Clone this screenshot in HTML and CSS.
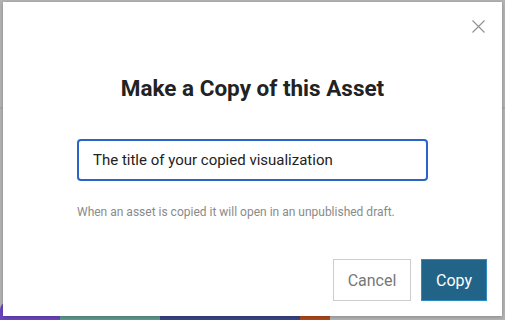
FILE: index.html
```html
<!DOCTYPE html>
<html lang="en">
<head>
    <meta charset="UTF-8">
    <meta name="viewport" content="width=device-width, initial-scale=1.0">
    <title>Make a Copy</title>
    <link rel="stylesheet" href="styles.css">
</head>
<body>
    <!-- page behind the overlay -->
    <div class="backdrop">
        <div class="rule"></div>
        <div class="tiles">
            <span class="tile purple"></span>
            <span class="tile teal"></span>
            <span class="tile navy"></span>
            <span class="tile orange"></span>
        </div>
    </div>

    <div class="dialog">
        <button class="close" aria-label="Close">
            <svg width="13" height="13" viewBox="0 0 13 13">
                <path d="M0.5 0.5 L12.5 12.5 M12.5 0.5 L0.5 12.5" stroke="#8f8f8f" stroke-width="1.1" fill="none"/>
            </svg>
        </button>
        <h1 class="title">Make a Copy of this Asset</h1>
        <div class="field">
            <input type="text" class="name-input" value="The title of your copied visualization">
            <p class="hint">When an asset is copied it will open in an unpublished draft.</p>
        </div>
        <div class="actions">
            <button class="btn btn-cancel">Cancel</button>
            <button class="btn btn-copy">Copy</button>
        </div>
    </div>
</body>
</html>
```

FILE: styles.css
```css
body {
    margin: 0;
    width: 505px;
    height: 320px;
    overflow: hidden;
    background-color: #b4b4b4;
    font-family: Roboto, "Liberation Sans", sans-serif;
    position: relative;
}

.backdrop {
    height: 100%;
    display: flex;
    flex-direction: column;
    justify-content: space-between;
}

.rule {
    margin-top: 107px;
    height: 2px;
    background-color: #a9a9a9;
}

.tiles {
    display: flex;
    height: 18px;
}

.tile {
    display: block;
}

.purple {
    width: 60px;
    background-color: #6a45bf;
    border-top-left-radius: 8px;
}

.teal {
    width: 100px;
    background-color: #5f9a8e;
}

.navy {
    width: 140px;
    background-color: #3a4386;
}

.orange {
    width: 30px;
    background-color: #b0481c;
    border-top-left-radius: 8px;
    border-top-right-radius: 8px;
}

.dialog {
    position: absolute;
    left: 3px;
    top: 2px;
    width: 499px;
    height: 314px;
    background-color: #fff;
    box-shadow: 0 1px 4px rgba(0, 0, 0, 0.25);
    box-sizing: border-box;
    display: flex;
    flex-direction: column;
    align-items: center;
}

.close {
    position: absolute;
    top: 18px;
    right: 17px;
    padding: 0;
    border: none;
    background: none;
    cursor: pointer;
    line-height: 0;
}

.title {
    margin: 72px 0 0;
    font-size: 22.5px;
    font-weight: 700;
    color: #222;
    line-height: 28px;
}

.field {
    margin-top: 37px;
    width: 351px;
}

.name-input {
    display: block;
    width: 100%;
    height: 42px;
    box-sizing: border-box;
    border: 2px solid #2b63c9;
    border-radius: 4px;
    padding: 0 14px;
    font-family: inherit;
    font-size: 15px;
    color: #222;
    outline: none;
}

.hint {
    margin: 24px 0 0;
    font-size: 12px;
    color: #8a8a8a;
}

.actions {
    margin-top: auto;
    align-self: stretch;
    display: flex;
    justify-content: flex-end;
    gap: 10px;
    padding: 0 15px 15px 0;
}

.btn {
    height: 42px;
    box-sizing: border-box;
    font-family: inherit;
    font-size: 16px;
    cursor: pointer;
    border-radius: 0;
}

.btn-cancel {
    width: 78px;
    background-color: #fff;
    color: #777;
    border: 1px solid #cdcdcd;
}

.btn-copy {
    width: 66px;
    background-color: #226488;
    color: #fff;
    border: 1px solid #2d8bc0;
}
```
